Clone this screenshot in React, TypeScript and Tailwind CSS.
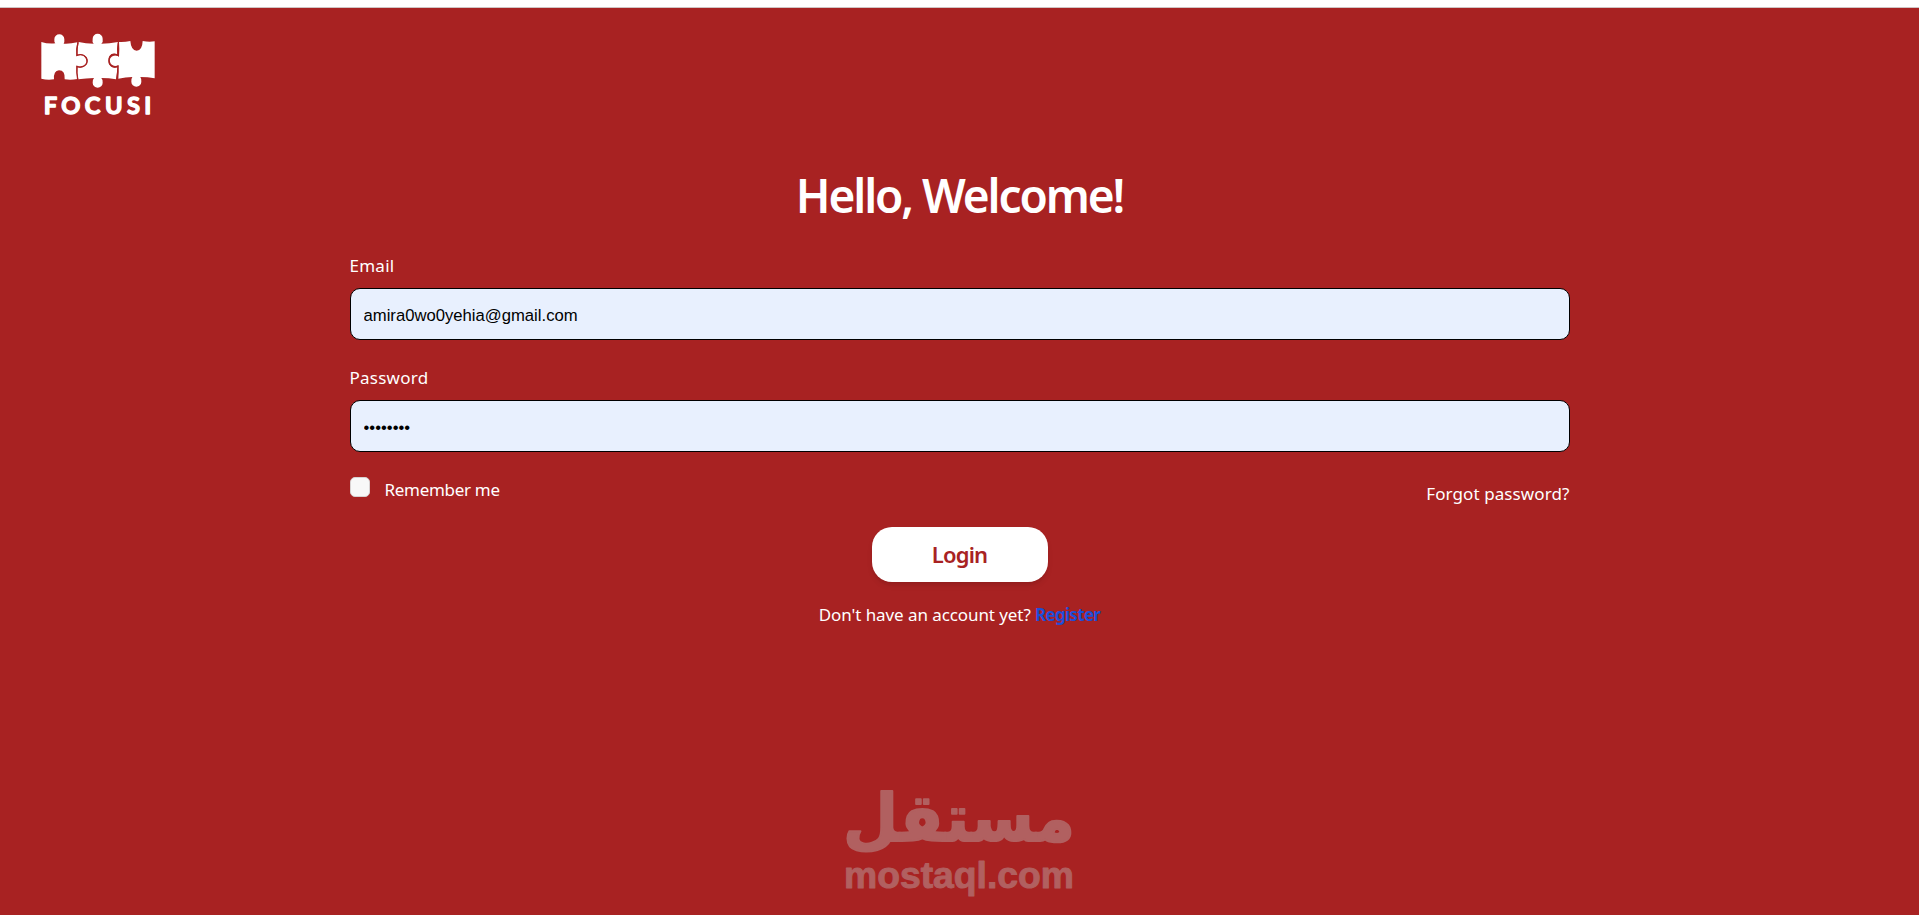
import React, { ChangeEvent, FormEvent, useState } from 'react'
import clsx from 'clsx'

const App = (): JSX.Element => {
    return (
        <div className="flex h-screen w-full flex-col overflow-hidden bg-[#a82222] font-['Noto_Sans','Open_Sans',sans-serif] text-white">
            <div className="h-2 w-full shrink-0 border-b border-[#cfc4c4] bg-white" />

            <header className="h-[151px] shrink-0 pt-[25px] pl-10">
                <Logo />
            </header>

            <LoginForm />
            <Watermark />
        </div>
    );
}

export default App

export const LoginForm = (): JSX.Element => {
    const [email, setEmail] = useState('amira0wo0yehia@gmail.com');
    const [password, setPassword] = useState('password');
    const [remember, setRemember] = useState(false);

    const handleSubmit = (event: FormEvent) => {
        event.preventDefault();
    }

    return (
        <form onSubmit={handleSubmit} className="mx-auto flex w-[1220px] shrink-0 flex-col text-[17px] leading-6 whitespace-nowrap">
            <h1 className="h-[72px] text-center text-[46px] leading-[72px] font-semibold tracking-[-2.1px]">
                Hello, Welcome!
            </h1>

            <Field label="Email" type="email" value={email} onChange={setEmail} className="mt-[23px]" />
            <Field label="Password" type="password" value={password} onChange={setPassword} className="mt-[26px]" />

            <div className="mt-[25px] flex h-[50px] justify-between">
                <label className="flex">
                    <input
                        type="checkbox"
                        checked={remember}
                        onChange={() => setRemember(!remember)}
                        className="size-5 appearance-none rounded-[5px] border border-[#d8d2d2] bg-[#f8f8f8] checked:bg-blue-600"
                    />
                    <span className="mt-px ml-[15px] tracking-[-0.3px]">Remember me</span>
                </label>
                <a href="#" className="mt-[5px] tracking-[0.1px]">Forgot password?</a>
            </div>

            <button className="mx-auto h-[55px] w-[176px] rounded-[20px] bg-white pb-0.5 text-[22px] font-semibold tracking-[-0.8px] text-[#a82222] shadow-md">
                Login
            </button>

            <p className="mt-[21px] text-center tracking-[-0.08px]">
                Don't have an account yet? <a href="#" className="font-bold tracking-[-0.7px] text-[#1d4ed8]">Register</a>
            </p>
        </form>
    );
}

type FieldProps = {
    label: string;
    type: string;
    value: string;
    onChange: (value: string) => void;
    className?: string;
}

const Field = ({ label, type, value, onChange, className }: FieldProps): JSX.Element => (
    <label className={clsx('flex flex-col', className)}>
        <span className="tracking-[0.25px]">{label}</span>
        <input
            type={type}
            value={value}
            onChange={(event: ChangeEvent<HTMLInputElement>) => onChange(event.target.value)}
            className="mt-[10px] h-[52px] w-full rounded-[10px] border border-black bg-[#e8f0fe] px-[13px] pt-[3px] font-['Liberation_Sans',sans-serif] text-[16.67px] text-black focus:outline-none"
        />
    </label>
)

export const Logo = (): JSX.Element => (
    <svg width="116" height="86" viewBox="120 99 348 258" fill="#fff">
        <path d="M124 126Q143 132 166 130Q162 126 163 118A15 15 0 0 1 193 118Q194 126 191 131Q211 132 232 127Q227 148 229 169Q240 162 251 168Q260 174 260 183Q260 193 251 198Q240 204 229 197Q228 217 232 237Q213 241 194 238Q196 211 177 211Q160 213 162 238Q142 241 124 236Z" />
        <path d="M236 126Q257 131 281 131Q276 125 278 116A15 15 0 0 1 308 116Q310 125 304 131Q328 131 354 126Q350 147 352 164Q341 158 331 166Q325 173 325 183Q325 193 332 199Q341 206 353 201Q351 219 348 238Q327 234 304 234Q309 239 308 248A15 15 0 0 1 278 248Q277 240 282 234Q258 235 235 238Q229 218 232 202Q244 206 255 198Q263 193 263 183Q263 172 254 167Q244 160 232 164Q232 145 236 126Z" />
        <path d="M357 126Q374 127 391 123Q393 151 410 152Q427 151 428 123Q447 127 464 124V235Q443 231 421 231Q425 237 424 245A15 15 0 0 1 394 245Q393 237 397 231Q377 232 355 236Q357 217 355 195Q347 200 338 196Q330 192 329 182Q330 171 339 168Q348 164 357 170Q359 147 357 126Z" />
        <path d="M234 127Q229 147 231 166Q249 160 258 172Q265 184 257 194Q247 205 231 199Q230 218 233 238M355 127Q352 147 354 166Q338 158 330 169Q324 182 330 193Q338 205 354 199Q353 218 351 238" fill="none" stroke="#a82222" strokeWidth="4" />
        <text
            x="131" y="343" textLength="323" lengthAdjust="spacing"
            stroke="#fff" strokeWidth="4" strokeLinejoin="round"
            className="font-['Lato',sans-serif] text-[71px] font-bold"
        >FOCUSI</text>
    </svg>
)

export const Watermark = (): JSX.Element => (
    <svg
        width="232" height="116" viewBox="0 0 232 116"
        className="mx-auto mt-auto mb-[9px] shrink-0 overflow-visible"
        fill="#b16060" stroke="#b16060" strokeLinejoin="round"
    >
        <text
            x="115" y="51" textAnchor="middle" direction="rtl" strokeWidth="2"
            textLength="232" lengthAdjust="spacingAndGlyphs"
            className="font-['DejaVu_Sans',sans-serif] text-[66px] font-bold"
        >مستقل</text>
        <text
            x="0" y="98" textLength="230" lengthAdjust="spacingAndGlyphs" strokeWidth="1"
            className="font-['Liberation_Sans',sans-serif] text-[37px] font-bold"
        >mostaql.com</text>
    </svg>
)
